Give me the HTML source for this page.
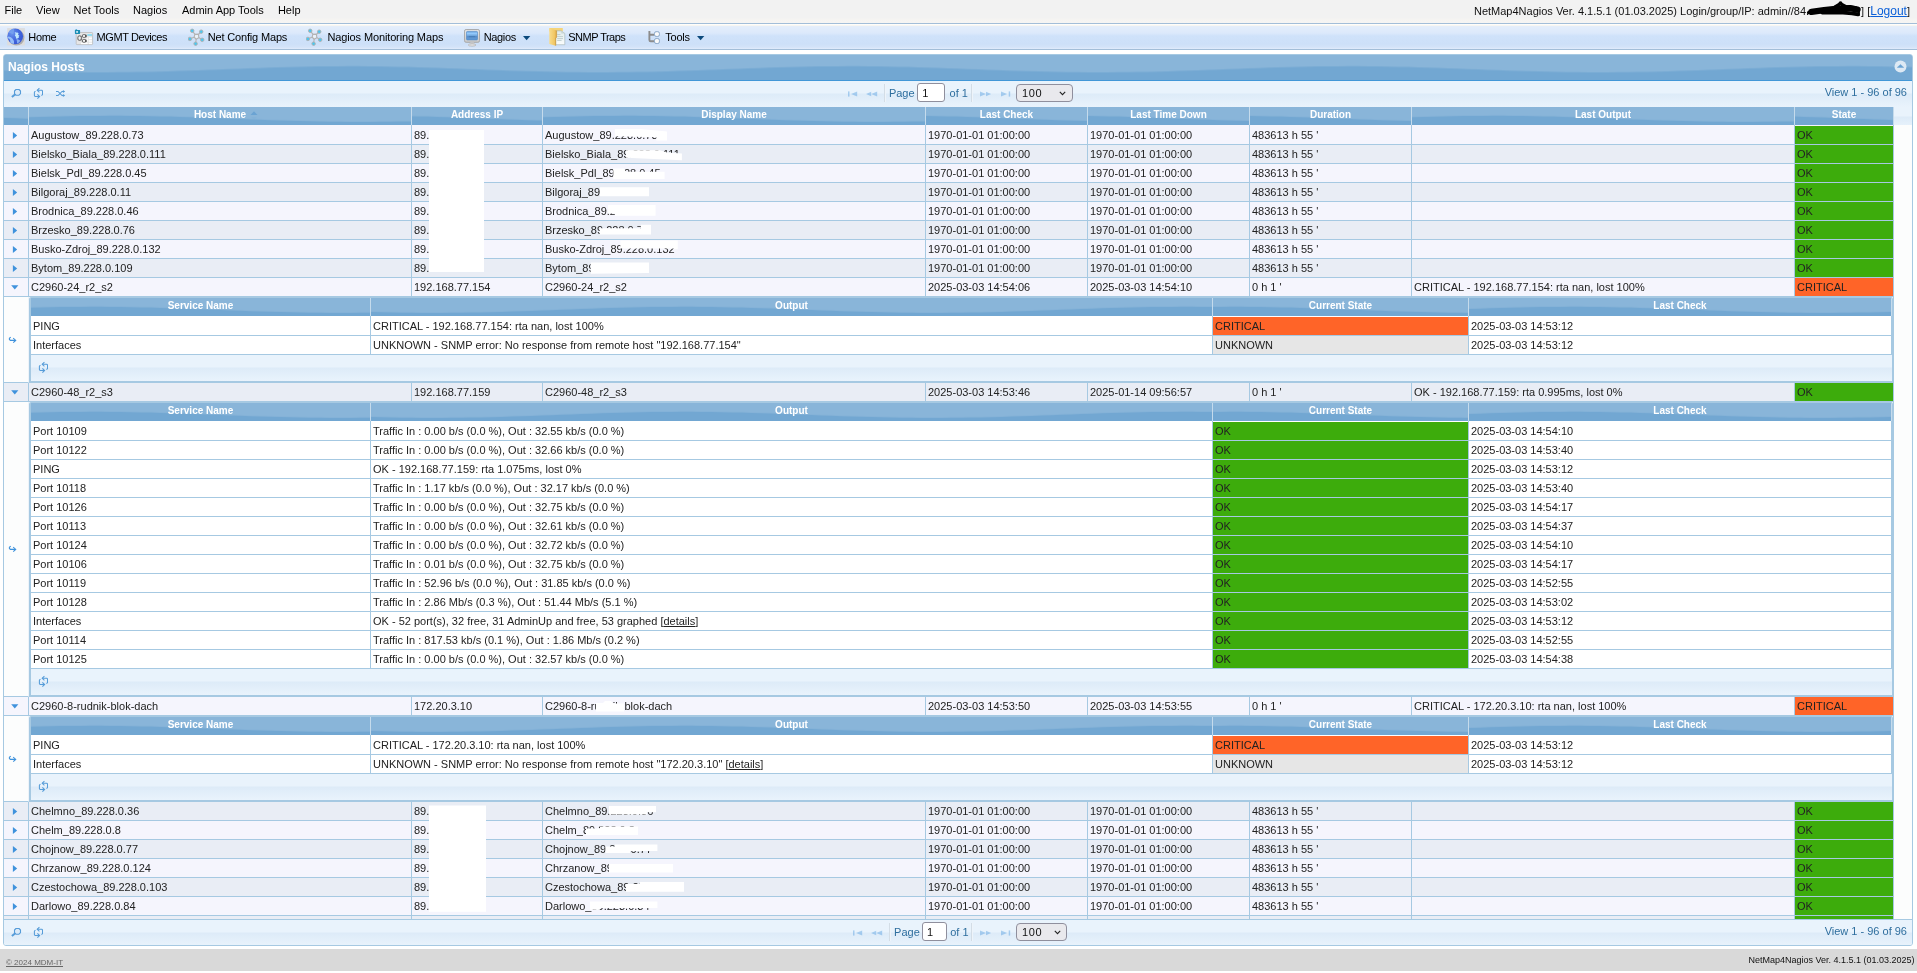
<!DOCTYPE html><html lang="en"><head><meta charset="utf-8"><title>NetMap4Nagios - Nagios Hosts</title><style>
*{box-sizing:border-box}
html,body{margin:0;padding:0}
body{will-change:transform;width:1917px;height:973px;overflow:hidden;background:#fff;font-family:"Liberation Sans",Arial,sans-serif;font-size:11px;color:#222;position:relative}
a{color:inherit}
#mb{position:absolute;left:0;top:0;width:1917px;height:23px;background:linear-gradient(#f2f2f2 0,#f2f2f2 18px,#f5f4f2 19px,#f6f5f3 23px);font-size:11px;color:#000}
#mb .mi{position:absolute;top:0;line-height:13px;padding-top:4px;white-space:nowrap}
#mb .rt{position:absolute;right:7px;top:5px;line-height:13px;white-space:nowrap;color:#111}
#mb .rt a{color:#0a5fd8;text-decoration:underline;font-size:12px}
#scrib{position:absolute;left:1800px;top:0;width:70px;height:22px}
#tb{position:absolute;left:0;top:23px;width:1917px;height:27px;border-top:1px solid #a3bed8;border-bottom:1px solid #a3bed8;background:linear-gradient(#ffffff 0,#fdfcf8 1px,#f3f1ea 2px,#e4eefb 2.5px,#dce9fb 9px,#cfe2fa 12px,#cde0f8 20px,#d3e3f8 23px,#e1ecfb 25px)}
#tb .ti{position:absolute;top:0;height:25px;white-space:nowrap;font-size:11px;letter-spacing:-0.3px;color:#000;line-height:13px;padding-top:7px}
#tb svg{position:absolute}
#gbox{position:absolute;left:3px;top:54px;width:1910px;height:892px;border:1px solid #a6c9e2;border-radius:3px;background:#fcfdfd;overflow:hidden}
.wv{position:absolute;left:0;top:0;z-index:0;display:block}
.hd{background:#72a7d2;position:relative;overflow:hidden}
#ttl{position:absolute;left:0;top:0;width:1908px;height:26px;border-bottom:1px solid #4297d7}
#ttl span{position:absolute;left:4px;top:5px;z-index:1;color:#fff;font-weight:bold;font-size:12px;line-height:14px}
#ttl .cl{position:absolute;left:1890px;top:5px;width:13px;height:13px;z-index:1}
.pg{position:absolute;left:0;width:1908px;height:26px;color:#2e6e9e;font-size:11px;background:linear-gradient(#e9f3fc 0,#e9f3fc 12px,#ddebf8 13px,#e9f3fc 26px)}
.pg svg{position:absolute}
.pg .t{position:absolute;white-space:nowrap;line-height:13px}
.pg .sep{position:absolute;width:2px;height:18px;background:#d3dde6;border-right:1px solid #eef4fa}
.pg .inp{position:absolute;height:19px;border:1px solid #8f8f9d;border-radius:3px;background:#fff;color:#111;font-size:11px;line-height:14px;padding:2px 0 0 4px}
.pg .sel{position:absolute;height:18px;border:1px solid #8f8f9d;border-radius:4px;background:#e9e9ed;color:#111;font-size:11px;letter-spacing:.6px;line-height:14px;padding:1px 0 0 5px}
#hdiv{position:absolute;left:0;top:52px;width:1908px;height:18px;background:linear-gradient(#e9f3fc 0,#e9f3fc 9px,#ddebf8 10px,#e6f1fb 18px)}
table{border-collapse:separate;border-spacing:0;table-layout:fixed}
th{position:relative;height:18px;padding:0;border-right:1px solid #c5dbec;background:#72a7d2;color:#fff;font-weight:bold;font-size:10px;text-align:center;overflow:hidden;vertical-align:top}
th div{position:relative;z-index:1;line-height:12px;padding-top:2px;white-space:nowrap}
#bdiv{position:absolute;left:0;top:70px;width:1908px;height:795px;overflow:hidden;background:#fcfdfd}
td{height:19px;padding:0 2px;border-right:1px solid #a6c9e2;border-bottom:1px solid #a6c9e2;white-space:nowrap;overflow:hidden;font-size:11px;vertical-align:middle;line-height:13px}
tr.r td{background:#f5f5fd}
tr.a td{background:#e9edf5}
tr.fr td{height:1px;border-bottom:0;background:#f5f5fd;padding:0}
td.ok{background:#3dac0c !important}
td.cr{background:#ff6428 !important}
td.un{background:#e6e6e6 !important}
td.ex{padding:0;position:relative}
td.ex svg{position:absolute}
tr.sg>td{background:#fcfdfd;padding:0}
tr.sg>td.sc{border-right:1px solid #edf3f9;position:relative}
tr.sg>td.sc svg{position:absolute;left:4px}
tr.sg>td.sb{padding:0;height:auto;vertical-align:top;overflow:visible}
.sgb{border:1px solid #a6c9e2;border-left-width:2px;width:1864px;border-radius:2px 2px 0 0;overflow:hidden;background:#fff}
.sgb table td{background:#fff}
.sgb tr.fr td{background:#fff}
.sgb .spg{position:relative;height:26px;width:1861px;background:linear-gradient(#e9f3fc 0,#e9f3fc 12px,#ddebf8 13px,#e9f3fc 26px)}
.sgb .spg svg{position:absolute;left:7px;top:6px}
.wb{position:absolute;left:0;top:0;z-index:3;pointer-events:none}
#ft{position:absolute;left:0;top:949px;width:1917px;height:22px;background:#d9d9d9;font-size:8px;color:#444}
#ft .l{position:absolute;left:6px;top:8px;line-height:11px;text-decoration:underline;color:#666}
#ft .r{position:absolute;right:2.5px;top:5px;line-height:12px;font-size:9px;color:#111}
</style></head><body>
<svg width="0" height="0" style="position:absolute"><defs><pattern id="wave" patternUnits="userSpaceOnUse" width="500" height="100"><rect width="500" height="100" fill="#72a7d2"/><path d="M0,0 L0,52.55 L10,52.17 L20,51.79 L30,51.40 L40,51.03 L50,50.67 L60,50.33 L70,50.02 L80,49.73 L90,49.48 L100,49.27 L110,49.09 L120,48.97 L130,48.88 L140,48.85 L150,48.87 L160,48.93 L170,49.04 L180,49.19 L190,49.39 L200,49.62 L210,49.90 L220,50.20 L230,50.53 L240,50.88 L250,51.25 L260,51.63 L270,52.01 L280,52.40 L290,52.77 L300,53.13 L310,53.47 L320,53.78 L330,54.07 L340,54.32 L350,54.53 L360,54.71 L370,54.83 L380,54.92 L390,54.95 L400,54.93 L410,54.87 L420,54.76 L430,54.61 L440,54.41 L450,54.18 L460,53.90 L470,53.60 L480,53.27 L490,52.92 L500,52.55 L500,0 Z" fill="#89b5d9"/></pattern><radialGradient id="glb" cx="0.3" cy="0.3" r="0.85"><stop offset="0" stop-color="#6d96ee"/><stop offset="0.5" stop-color="#4468de"/><stop offset="1" stop-color="#3355d2"/></radialGradient><linearGradient id="scr" x1="0" y1="0" x2="0" y2="1"><stop offset="0" stop-color="#6aa4e0"/><stop offset="0.25" stop-color="#93c9fb"/><stop offset="0.5" stop-color="#6ea6de"/><stop offset="0.6" stop-color="#588fcb"/><stop offset="1" stop-color="#629bd6"/></linearGradient><linearGradient id="bez" x1="0" y1="0" x2="0" y2="1"><stop offset="0" stop-color="#e6e6e6"/><stop offset="1" stop-color="#c9c9c9"/></linearGradient><linearGradient id="doc" x1="0" y1="0" x2="0" y2="1"><stop offset="0" stop-color="#dfeaea"/><stop offset="1" stop-color="#fbfdfd"/></linearGradient><linearGradient id="fld" x1="0" y1="0" x2="1" y2="0"><stop offset="0" stop-color="#f8dc8c"/><stop offset="0.7" stop-color="#f1c765"/><stop offset="1" stop-color="#dca541"/></linearGradient></defs></svg>
<div id="mb">
<span class="mi" style="left:4.5px">File</span>
<span class="mi" style="left:36px">View</span>
<span class="mi" style="left:73.6px">Net Tools</span>
<span class="mi" style="left:133px">Nagios</span>
<span class="mi" style="left:182px">Admin App Tools</span>
<span class="mi" style="left:277.9px">Help</span>
<span class="rt">NetMap4Nagios Ver. 4.1.5.1 (01.03.2025) Login/group/IP: admin//84.<span style="display:inline-block;width:52px"></span>] [<a>Logout</a>]</span>
<svg id="scrib" viewBox="0 0 70 22" fill="none" stroke="#000" stroke-linecap="round" stroke-linejoin="round"><path d="M8.5 12.6 L13 11.6" stroke-width="3.2"/><path d="M11.5 11.8 L24 10.2 L38 8.8 L50 8.2 L57.5 9.6" stroke-width="6.4"/><path d="M22 12.6 L40 12.4 L52 13.4 L58 14.4" stroke-width="3.6"/><path d="M35 6.8 L40.4 3.6 L46.5 7" stroke-width="3.2"/><path d="M48 6.4 L56 7.4 L58.8 11.5 L58.8 15" stroke-width="2.2"/><circle cx="40.5" cy="3.1" r="1.9" fill="#000" stroke="none"/></svg>
</div>
<div id="tb"><svg style="left:7px;top:4px" width="19" height="19" viewBox="0 0 19 19"><rect x="0.2" y="0.1" width="17.7" height="17.3" fill="#dddddd"/><ellipse cx="9.4" cy="9.6" rx="8" ry="7.9" fill="#555" opacity=".35"/><circle cx="8.2" cy="8.3" r="7.9" fill="url(#glb)"/><path d="M0.5 8.4 C3 8.2 5.6 10 6.6 12.2 C7.2 13.6 7.2 14.8 6.8 16 C5.4 15.8 4.2 15.2 3.2 14.4 C3.8 12.6 2.8 10.6 0.6 10 Z" fill="#9cc4fb" opacity=".92"/><path d="M7.7 4.4 C9 4.2 9.6 5 10.6 4.6 L11.6 5.6 L11 6.8 L12.4 7.8 L11.6 8.8 L12 9.6 C11 10.6 10 11 8.8 10.6 C9.4 9.4 8.6 8.4 7.8 7.6 C8.6 6.6 8.6 5.4 7.7 4.4 Z" fill="#bfe6fc"/><path d="M9.4 11.2 C10.8 11 12.4 11.6 13.4 12.8 C12.6 14 11.4 15 10 15.6 C10.2 14 9.8 12.6 9.4 11.2 Z" fill="#8fb7f6" opacity=".9"/><path d="M1.4 4.6 C2.6 2.6 4.6 1 7 0.6 C7.4 2.4 7 4.4 6.2 6.2 C4.6 5.4 3 5 1.4 4.6 Z" fill="#7aa4f2" opacity=".75"/></svg><svg style="left:74px;top:5px" width="20" height="17" viewBox="0 0 20 17"><rect x="2.2" y="3.5" width="16.4" height="12.1" rx=".8" fill="#e6e6e6" stroke="#bdbdbd" stroke-width=".8"/><rect x="13.3" y="5.1" width="4.7" height="1.8" fill="#8bdcf3"/><rect x="14.8" y="8.5" width="3.2" height="1.7" fill="#fff"/><rect x="14.8" y="11.2" width="3.2" height="1.5" fill="#fff"/><rect x="14.8" y="13.7" width="3.2" height="1.4" fill="#fff"/><rect x="7" y="13.7" width="6.6" height="1.4" fill="#fff"/><rect x="12.6" y="8.5" width="1.4" height="4.2" fill="#f7f7f7"/><g fill="#f2f2f2" stroke="#5e5e5e" stroke-width="1"><rect x="3.9" y="6.9" width="3.4" height="4.4" rx="1.3"/><rect x="8.3" y="5.6" width="3.6" height="2.8" rx="1.2"/><rect x="8.3" y="10.5" width="3.6" height="2.8" rx="1.2"/></g><path d="M11.9 5.8 V8.2 M11.9 10.7 V13.1" stroke="#4a4a4a" stroke-width="1.3"/><path d="M7.3 8 L8.3 7.2 M7.3 10.4 L8.3 11.6" stroke="#5e5e5e" stroke-width=".9"/><path d="M0.9 1 L2.4 0.3 L3.4 1 H5.6 Q6.1 1 6.1 1.6 V4.3 Q6.1 4.9 5.5 4.9 H1.5 Q0.9 4.9 0.9 4.3 Z" fill="#1a8db4"/><rect x="2.2" y="2.2" width="1.8" height="1.5" fill="#e9f7fc"/></svg><svg style="left:188px;top:4.4px" width="17" height="18" viewBox="0 0 17 18"><g stroke="#b3b3b3" stroke-width="1.1" fill="none"><path d="M4.2 2.8 L7 6.4 M13.2 3.7 L10.4 6.6 M1.8 10.9 L6.4 9 M14.2 11.8 L10.6 9.4 M7.6 15.9 L8.2 11"/><path d="M6.8 6.4 L10.4 6.2 L10.8 9.6 L8.2 11.2 L6.2 9.2 Z" fill="#eaf1f8"/></g><g fill="#4cc7f0" stroke="#b0b0b0" stroke-width=".9"><circle cx="4.2" cy="2.8" r="1.75"/><circle cx="13.2" cy="3.7" r="1.75"/><circle cx="1.9" cy="10.9" r="1.75"/><circle cx="14.2" cy="11.8" r="1.75"/><circle cx="7.6" cy="15.7" r="1.75"/></g></svg><svg style="left:306px;top:4.4px" width="17" height="18" viewBox="0 0 17 18"><g stroke="#b3b3b3" stroke-width="1.1" fill="none"><path d="M4.2 2.8 L7 6.4 M13.2 3.7 L10.4 6.6 M1.8 10.9 L6.4 9 M14.2 11.8 L10.6 9.4 M7.6 15.9 L8.2 11"/><path d="M6.8 6.4 L10.4 6.2 L10.8 9.6 L8.2 11.2 L6.2 9.2 Z" fill="#eaf1f8"/></g><g fill="#4cc7f0" stroke="#b0b0b0" stroke-width=".9"><circle cx="4.2" cy="2.8" r="1.75"/><circle cx="13.2" cy="3.7" r="1.75"/><circle cx="1.9" cy="10.9" r="1.75"/><circle cx="14.2" cy="11.8" r="1.75"/><circle cx="7.6" cy="15.7" r="1.75"/></g></svg><svg style="left:464px;top:5px" width="17" height="18" viewBox="0 0 17 18"><rect x="0.5" y="0.5" width="15" height="12.8" rx="1.6" fill="url(#bez)" stroke="#a4a4a4" stroke-width=".9"/><rect x="2.5" y="2.4" width="11" height="8.5" rx=".9" fill="url(#scr)" stroke="#4c86c6" stroke-width=".6"/><rect x="4.8" y="7.2" width="6.4" height="1" fill="#3f74ad" opacity=".75"/><path d="M6.4 13.4 H9.8 L10.3 15.4 H5.9 Z" fill="#d5d5d5"/><ellipse cx="8.1" cy="16" rx="3.8" ry="1.1" fill="#ededed" stroke="#a8a8a8" stroke-width=".7"/></svg><svg style="left:548px;top:3px" width="18" height="20" viewBox="0 0 18 20"><rect x="1.3" y="1.1" width="13.5" height="3.4" rx=".5" fill="#f4d47a"/><path d="M7.6 3.8 H13 L16.8 6.4 V17.7 H7.6 Z" fill="url(#doc)" stroke="#9fb0b0" stroke-width=".6"/><path d="M13 3.8 L13.4 6.6 L16.8 6.4 Z" fill="#c9d6d6"/><path d="M9.2 7.6 H12.4 M9.2 9.6 H15 M9.2 11.6 H15 M9.2 13.4 H13.6" stroke="#b4c4c4" stroke-width=".8"/><path d="M1.3 1.3 L8.6 3.6 V10.4 L7.7 10.8 V18.7 L1.3 17.1 Z" fill="url(#fld)"/><path d="M8.6 3.8 V10.4 L7.7 10.8 V18.6" stroke="#c89639" stroke-width=".7" fill="none"/></svg><svg style="left:647px;top:6px" width="14" height="15" viewBox="0 0 14 15"><path d="M2.4 1 V10 Q2.4 11.3 3.7 11.3 H7.4 M2.4 4.75 H7.4" fill="none" stroke="#8c8c8c" stroke-width="1.9"/><rect x="7.5" y="1.7" width="4.9" height="4.7" rx="1.6" fill="#fbfbfb" stroke="#8ba8c9" stroke-width="1"/><rect x="7.5" y="8.6" width="4.9" height="4.9" rx="1.6" fill="#fbfbfb" stroke="#8ba8c9" stroke-width="1"/></svg><svg style="left:522.7px;top:12px" width="8" height="5" viewBox="0 0 8 5"><path d="M0 0 H7.3 L3.65 4.3 Z" fill="#0c4a7c"/></svg><svg style="left:696.8px;top:12px" width="8" height="5" viewBox="0 0 8 5"><path d="M0 0 H7.3 L3.65 4.3 Z" fill="#0c4a7c"/></svg>
<span class="ti" style="left:28.3px;letter-spacing:-0.33px">Home</span>
<span class="ti" style="left:96.6px;letter-spacing:-0.42px">MGMT Devices</span>
<span class="ti" style="left:207.8px;letter-spacing:-0.17px">Net Config Maps</span>
<span class="ti" style="left:327.5px;letter-spacing:-0.13px">Nagios Monitoring Maps</span>
<span class="ti" style="left:483.8px;letter-spacing:-0.38px">Nagios</span>
<span class="ti" style="left:568.2px;letter-spacing:-0.5px">SNMP Traps</span>
<span class="ti" style="left:665.3px;letter-spacing:-0.26px">Tools</span>
</div>
<div id="gbox">
<div id="ttl" class="hd"><svg class="wv" width="1908" height="27" viewBox="0 0 1908 27" preserveAspectRatio="none"><g transform="translate(704.0,-37.6)"><rect x="-704.0" y="37.6" width="1908" height="27" fill="url(#wave)"/></g></svg><span>Nagios Hosts</span><svg class="cl" viewBox="0 0 13 13"><circle cx="6.5" cy="6.5" r="6" fill="#dde9f4"/><path d="M3.3 7.4 L6.5 4.5 L9.7 7.4 Z" fill="#6aa3d3" stroke="#6aa3d3" stroke-width=".5" stroke-linejoin="round"/></svg></div>
<div class="pg" style="top:26px"><svg style="left:7px;top:7px" width="12" height="12" viewBox="0 0 12 12"><path d="M5 1.5 H8 L9.5 3 V5.7 L8 7.2 H5 L3.5 5.7 V3 Z" fill="#dbeaf8" stroke="#569cd8" stroke-width="1.1" stroke-linejoin="round"/><path d="M4.3 6.2 L0.9 9" stroke="#569cd8" stroke-width="2"/></svg><svg style="left:29px;top:6px" width="12" height="13" viewBox="0 0 12 13" fill="none" stroke="#569cd8" stroke-width="1.05"><path d="M4.3 3.3 H8.6 Q9.5 3.3 9.5 4.2 V7.6 L8.5 8.6"/><path d="M6.4 1.2 L4.2 3.3 L6.4 5.4"/><path d="M6.6 9.5 H2.3 Q1.4 9.5 1.4 8.6 V5.2 L2.4 4.2"/><path d="M4.4 7.4 L6.6 9.5 L4.4 11.6"/></svg><svg style="left:52px;top:9px" width="10" height="8" viewBox="0 0 10 8" fill="none" stroke="#569cd8" stroke-width="1.05"><path d="M0 1.5 H2 L6 5.5 H7.2"/><path d="M0 5.5 H2 L6 1.5 H7.2"/><path d="M6.9 0 L9.2 1.5 L6.9 3 Z M6.9 4 L9.2 5.5 L6.9 7 Z" fill="#569cd8" stroke="none"/></svg><svg style="left:843.75px;top:10px;opacity:0.38" width="10" height="6" viewBox="0 0 10 6" fill="#3f92dc"><rect x="0" y="0.4" width="1.5" height="5.2"/><path d="M9.2 0.4 V5.6 L3 3 Z"/></svg><svg style="left:861.6px;top:10px;opacity:0.38" width="12" height="6" viewBox="0 0 12 6" fill="#3f92dc"><path d="M5.2 0.7 V5.3 L0 3 Z"/><path d="M11.2 0.4 V5.6 L5.2 3 Z"/></svg><div class="sep" style="left:880.2px;top:3px"></div><div class="t" style="left:884.9px;top:6px">Page</div><div class="inp" style="left:913.2px;top:2px;width:28.3px">1</div><div class="t" style="left:945.6px;top:6px">of 1</div><div class="sep" style="left:967px;top:3px"></div><svg style="left:975.6px;top:10px;opacity:0.38" width="12" height="6" viewBox="0 0 12 6" fill="#3f92dc"><path d="M0 0.4 V5.6 L6 3 Z"/><path d="M6 0.7 V5.3 L11.2 3 Z"/></svg><svg style="left:996.8px;top:10px;opacity:0.38" width="10" height="6" viewBox="0 0 10 6" fill="#3f92dc"><path d="M0 0.4 V5.6 L6.2 3 Z"/><rect x="7.7" y="0.4" width="1.5" height="5.2"/></svg><div class="sel" style="left:1012px;top:3px;width:56.5px">100<svg style="left:42.0px;top:6px" width="7" height="5" viewBox="0 0 7 5" fill="none" stroke="#222" stroke-width="1.1"><path d="M0.8 0.9 L3.5 3.6 L6.2 0.9"/></svg></div><div class="t" style="right:5px;top:5px">View 1 - 96 of 96</div></div>
<div id="hdiv"><table style="width:1890px"><colgroup><col style="width:25px"><col style="width:383px"><col style="width:131px"><col style="width:383px"><col style="width:162px"><col style="width:162px"><col style="width:162px"><col style="width:383px"><col style="width:99px"></colgroup><tr><th><svg class="wv" width="24" height="18" viewBox="0 0 24 18" preserveAspectRatio="none"><g transform="translate(-238.0,-40.2)"><rect x="238.0" y="40.2" width="24" height="18" fill="url(#wave)"/></g></svg><div></div></th><th><svg class="wv" width="382" height="18" viewBox="0 0 382 18" preserveAspectRatio="none"><g transform="translate(-59.0,-40.2)"><rect x="59.0" y="40.2" width="382" height="18" fill="url(#wave)"/></g></svg><div>Host Name</div><svg style="position:absolute;z-index:1;left:221px;top:4px" width="8" height="10" viewBox="0 0 8 10"><path d="M0.5 4 L4 0.3 L7.5 4 Z" fill="#6aa3d3"/><path d="M1.2 6.2 L4 9 L6.8 6.2 Z" fill="#7fb0d8" opacity=".55"/></svg></th><th><svg class="wv" width="130" height="18" viewBox="0 0 130 18" preserveAspectRatio="none"><g transform="translate(-185.0,-40.2)"><rect x="185.0" y="40.2" width="130" height="18" fill="url(#wave)"/></g></svg><div>Address IP</div></th><th><svg class="wv" width="382" height="18" viewBox="0 0 382 18" preserveAspectRatio="none"><g transform="translate(-59.0,-40.2)"><rect x="59.0" y="40.2" width="382" height="18" fill="url(#wave)"/></g></svg><div>Display Name</div></th><th><svg class="wv" width="161" height="18" viewBox="0 0 161 18" preserveAspectRatio="none"><g transform="translate(-169.5,-40.2)"><rect x="169.5" y="40.2" width="161" height="18" fill="url(#wave)"/></g></svg><div>Last Check</div></th><th><svg class="wv" width="161" height="18" viewBox="0 0 161 18" preserveAspectRatio="none"><g transform="translate(-169.5,-40.2)"><rect x="169.5" y="40.2" width="161" height="18" fill="url(#wave)"/></g></svg><div>Last Time Down</div></th><th><svg class="wv" width="161" height="18" viewBox="0 0 161 18" preserveAspectRatio="none"><g transform="translate(-169.5,-40.2)"><rect x="169.5" y="40.2" width="161" height="18" fill="url(#wave)"/></g></svg><div>Duration</div></th><th><svg class="wv" width="382" height="18" viewBox="0 0 382 18" preserveAspectRatio="none"><g transform="translate(-59.0,-40.2)"><rect x="59.0" y="40.2" width="382" height="18" fill="url(#wave)"/></g></svg><div>Last Output</div></th><th><svg class="wv" width="98" height="18" viewBox="0 0 98 18" preserveAspectRatio="none"><g transform="translate(-201.0,-40.2)"><rect x="201.0" y="40.2" width="98" height="18" fill="url(#wave)"/></g></svg><div>State</div></th></tr></table></div>
<div id="bdiv"><table style="width:1890px"><colgroup><col style="width:25px"><col style="width:383px"><col style="width:131px"><col style="width:383px"><col style="width:162px"><col style="width:162px"><col style="width:162px"><col style="width:383px"><col style="width:99px"></colgroup><tr class="fr"><td></td><td></td><td></td><td></td><td></td><td></td><td></td><td></td><td></td></tr><tr class="r"><td class="ex"><svg style="left:8px;top:6px" width="6" height="8" viewBox="0 0 6 8"><path d="M0.9 0 L5.2 3.5 L0.9 7 Z" fill="#3f92dc"/></svg></td><td>Augustow_89.228.0.73</td><td>89.</td><td>Augustow_89.228.0.73</td><td>1970-01-01 01:00:00</td><td>1970-01-01 01:00:00</td><td>483613 h 55 '</td><td></td><td class="ok">OK</td></tr><tr class="a"><td class="ex"><svg style="left:8px;top:6px" width="6" height="8" viewBox="0 0 6 8"><path d="M0.9 0 L5.2 3.5 L0.9 7 Z" fill="#3f92dc"/></svg></td><td>Bielsko_Biala_89.228.0.111</td><td>89.</td><td>Bielsko_Biala_89.228.0.111</td><td>1970-01-01 01:00:00</td><td>1970-01-01 01:00:00</td><td>483613 h 55 '</td><td></td><td class="ok">OK</td></tr><tr class="r"><td class="ex"><svg style="left:8px;top:6px" width="6" height="8" viewBox="0 0 6 8"><path d="M0.9 0 L5.2 3.5 L0.9 7 Z" fill="#3f92dc"/></svg></td><td>Bielsk_Pdl_89.228.0.45</td><td>89.</td><td>Bielsk_Pdl_89.228.0.45</td><td>1970-01-01 01:00:00</td><td>1970-01-01 01:00:00</td><td>483613 h 55 '</td><td></td><td class="ok">OK</td></tr><tr class="a"><td class="ex"><svg style="left:8px;top:6px" width="6" height="8" viewBox="0 0 6 8"><path d="M0.9 0 L5.2 3.5 L0.9 7 Z" fill="#3f92dc"/></svg></td><td>Bilgoraj_89.228.0.11</td><td>89.</td><td>Bilgoraj_89.228.0.11</td><td>1970-01-01 01:00:00</td><td>1970-01-01 01:00:00</td><td>483613 h 55 '</td><td></td><td class="ok">OK</td></tr><tr class="r"><td class="ex"><svg style="left:8px;top:6px" width="6" height="8" viewBox="0 0 6 8"><path d="M0.9 0 L5.2 3.5 L0.9 7 Z" fill="#3f92dc"/></svg></td><td>Brodnica_89.228.0.46</td><td>89.</td><td>Brodnica_89.228.0.46</td><td>1970-01-01 01:00:00</td><td>1970-01-01 01:00:00</td><td>483613 h 55 '</td><td></td><td class="ok">OK</td></tr><tr class="a"><td class="ex"><svg style="left:8px;top:6px" width="6" height="8" viewBox="0 0 6 8"><path d="M0.9 0 L5.2 3.5 L0.9 7 Z" fill="#3f92dc"/></svg></td><td>Brzesko_89.228.0.76</td><td>89.</td><td>Brzesko_89.228.0.76</td><td>1970-01-01 01:00:00</td><td>1970-01-01 01:00:00</td><td>483613 h 55 '</td><td></td><td class="ok">OK</td></tr><tr class="r"><td class="ex"><svg style="left:8px;top:6px" width="6" height="8" viewBox="0 0 6 8"><path d="M0.9 0 L5.2 3.5 L0.9 7 Z" fill="#3f92dc"/></svg></td><td>Busko-Zdroj_89.228.0.132</td><td>89.</td><td>Busko-Zdroj_89.228.0.132</td><td>1970-01-01 01:00:00</td><td>1970-01-01 01:00:00</td><td>483613 h 55 '</td><td></td><td class="ok">OK</td></tr><tr class="a"><td class="ex"><svg style="left:8px;top:6px" width="6" height="8" viewBox="0 0 6 8"><path d="M0.9 0 L5.2 3.5 L0.9 7 Z" fill="#3f92dc"/></svg></td><td>Bytom_89.228.0.109</td><td>89.</td><td>Bytom_89.228.0.109</td><td>1970-01-01 01:00:00</td><td>1970-01-01 01:00:00</td><td>483613 h 55 '</td><td></td><td class="ok">OK</td></tr><tr class="r"><td class="ex"><svg style="left:7px;top:7px" width="8" height="5" viewBox="0 0 8 5"><path d="M0.2 0.3 H7.4 L3.8 4.6 Z" fill="#3f92dc"/></svg></td><td>C2960-24_r2_s2</td><td>192.168.77.154</td><td>C2960-24_r2_s2</td><td>2025-03-03 14:54:06</td><td>2025-03-03 14:54:10</td><td>0 h 1 '</td><td>CRITICAL - 192.168.77.154: rta nan, lost 100%</td><td class="cr">CRITICAL</td></tr><tr class="sg"><td class="sc"><svg style="top:39px" width="9" height="8" viewBox="0 0 9 8" fill="none" stroke="#3f92dc" stroke-width="1.1"><path d="M2.7 1.2 L1.4 2.3 V3.4 L2.4 4.4 H7.4"/><path d="M5.2 2.2 L7.7 4.4 L5.2 6.6"/></svg></td><td class="sb" colspan="8"><div class="sgb"><table style="width:1861px"><colgroup><col style="width:340px"><col style="width:842px"><col style="width:256px"><col style="width:423px"></colgroup><tr><th><svg class="wv" width="339" height="18" viewBox="0 0 339 18" preserveAspectRatio="none"><g transform="translate(-80.5,-40.2)"><rect x="80.5" y="40.2" width="339" height="18" fill="url(#wave)"/></g></svg><div>Service Name</div></th><th><svg class="wv" width="841" height="18" viewBox="0 0 841 18" preserveAspectRatio="none"><g transform="translate(170.5,-40.2)"><rect x="-170.5" y="40.2" width="841" height="18" fill="url(#wave)"/></g></svg><div>Output</div></th><th><svg class="wv" width="255" height="18" viewBox="0 0 255 18" preserveAspectRatio="none"><g transform="translate(-122.5,-40.2)"><rect x="122.5" y="40.2" width="255" height="18" fill="url(#wave)"/></g></svg><div>Current State</div></th><th><svg class="wv" width="422" height="18" viewBox="0 0 422 18" preserveAspectRatio="none"><g transform="translate(-39.0,-40.2)"><rect x="39.0" y="40.2" width="422" height="18" fill="url(#wave)"/></g></svg><div>Last Check</div></th></tr></table><table style="width:1861px"><colgroup><col style="width:340px"><col style="width:842px"><col style="width:256px"><col style="width:423px"></colgroup><tr class="fr"><td></td><td></td><td></td><td></td></tr><tr><td>PING</td><td>CRITICAL - 192.168.77.154: rta nan, lost 100%</td><td class="cr">CRITICAL</td><td>2025-03-03 14:53:12</td></tr><tr><td>Interfaces</td><td>UNKNOWN - SNMP error: No response from remote host "192.168.77.154"</td><td class="un">UNKNOWN</td><td>2025-03-03 14:53:12</td></tr></table><div class="spg"><svg  width="12" height="13" viewBox="0 0 12 13" fill="none" stroke="#569cd8" stroke-width="1.05"><path d="M4.3 3.3 H8.6 Q9.5 3.3 9.5 4.2 V7.6 L8.5 8.6"/><path d="M6.4 1.2 L4.2 3.3 L6.4 5.4"/><path d="M6.6 9.5 H2.3 Q1.4 9.5 1.4 8.6 V5.2 L2.4 4.2"/><path d="M4.4 7.4 L6.6 9.5 L4.4 11.6"/></svg></div></div></td></tr><tr class="a"><td class="ex"><svg style="left:7px;top:7px" width="8" height="5" viewBox="0 0 8 5"><path d="M0.2 0.3 H7.4 L3.8 4.6 Z" fill="#3f92dc"/></svg></td><td>C2960-48_r2_s3</td><td>192.168.77.159</td><td>C2960-48_r2_s3</td><td>2025-03-03 14:53:46</td><td>2025-01-14 09:56:57</td><td>0 h 1 '</td><td>OK - 192.168.77.159: rta 0.995ms, lost 0%</td><td class="ok">OK</td></tr><tr class="sg"><td class="sc"><svg style="top:143px" width="9" height="8" viewBox="0 0 9 8" fill="none" stroke="#3f92dc" stroke-width="1.1"><path d="M2.7 1.2 L1.4 2.3 V3.4 L2.4 4.4 H7.4"/><path d="M5.2 2.2 L7.7 4.4 L5.2 6.6"/></svg></td><td class="sb" colspan="8"><div class="sgb"><table style="width:1861px"><colgroup><col style="width:340px"><col style="width:842px"><col style="width:256px"><col style="width:423px"></colgroup><tr><th><svg class="wv" width="339" height="18" viewBox="0 0 339 18" preserveAspectRatio="none"><g transform="translate(-80.5,-40.2)"><rect x="80.5" y="40.2" width="339" height="18" fill="url(#wave)"/></g></svg><div>Service Name</div></th><th><svg class="wv" width="841" height="18" viewBox="0 0 841 18" preserveAspectRatio="none"><g transform="translate(170.5,-40.2)"><rect x="-170.5" y="40.2" width="841" height="18" fill="url(#wave)"/></g></svg><div>Output</div></th><th><svg class="wv" width="255" height="18" viewBox="0 0 255 18" preserveAspectRatio="none"><g transform="translate(-122.5,-40.2)"><rect x="122.5" y="40.2" width="255" height="18" fill="url(#wave)"/></g></svg><div>Current State</div></th><th><svg class="wv" width="422" height="18" viewBox="0 0 422 18" preserveAspectRatio="none"><g transform="translate(-39.0,-40.2)"><rect x="39.0" y="40.2" width="422" height="18" fill="url(#wave)"/></g></svg><div>Last Check</div></th></tr></table><table style="width:1861px"><colgroup><col style="width:340px"><col style="width:842px"><col style="width:256px"><col style="width:423px"></colgroup><tr class="fr"><td></td><td></td><td></td><td></td></tr><tr><td>Port 10109</td><td>Traffic In : 0.00 b/s (0.0 %), Out : 32.55 kb/s (0.0 %)</td><td class="ok">OK</td><td>2025-03-03 14:54:10</td></tr><tr><td>Port 10122</td><td>Traffic In : 0.00 b/s (0.0 %), Out : 32.66 kb/s (0.0 %)</td><td class="ok">OK</td><td>2025-03-03 14:53:40</td></tr><tr><td>PING</td><td>OK - 192.168.77.159: rta 1.075ms, lost 0%</td><td class="ok">OK</td><td>2025-03-03 14:53:12</td></tr><tr><td>Port 10118</td><td>Traffic In : 1.17 kb/s (0.0 %), Out : 32.17 kb/s (0.0 %)</td><td class="ok">OK</td><td>2025-03-03 14:53:40</td></tr><tr><td>Port 10126</td><td>Traffic In : 0.00 b/s (0.0 %), Out : 32.75 kb/s (0.0 %)</td><td class="ok">OK</td><td>2025-03-03 14:54:17</td></tr><tr><td>Port 10113</td><td>Traffic In : 0.00 b/s (0.0 %), Out : 32.61 kb/s (0.0 %)</td><td class="ok">OK</td><td>2025-03-03 14:54:37</td></tr><tr><td>Port 10124</td><td>Traffic In : 0.00 b/s (0.0 %), Out : 32.72 kb/s (0.0 %)</td><td class="ok">OK</td><td>2025-03-03 14:54:10</td></tr><tr><td>Port 10106</td><td>Traffic In : 0.01 b/s (0.0 %), Out : 32.75 kb/s (0.0 %)</td><td class="ok">OK</td><td>2025-03-03 14:54:17</td></tr><tr><td>Port 10119</td><td>Traffic In : 52.96 b/s (0.0 %), Out : 31.85 kb/s (0.0 %)</td><td class="ok">OK</td><td>2025-03-03 14:52:55</td></tr><tr><td>Port 10128</td><td>Traffic In : 2.86 Mb/s (0.3 %), Out : 51.44 Mb/s (5.1 %)</td><td class="ok">OK</td><td>2025-03-03 14:53:02</td></tr><tr><td>Interfaces</td><td>OK - 52 port(s), 32 free, 31 AdminUp and free, 53 graphed [<u>details</u>]</td><td class="ok">OK</td><td>2025-03-03 14:53:12</td></tr><tr><td>Port 10114</td><td>Traffic In : 817.53 kb/s (0.1 %), Out : 1.86 Mb/s (0.2 %)</td><td class="ok">OK</td><td>2025-03-03 14:52:55</td></tr><tr><td>Port 10125</td><td>Traffic In : 0.00 b/s (0.0 %), Out : 32.57 kb/s (0.0 %)</td><td class="ok">OK</td><td>2025-03-03 14:54:38</td></tr></table><div class="spg"><svg  width="12" height="13" viewBox="0 0 12 13" fill="none" stroke="#569cd8" stroke-width="1.05"><path d="M4.3 3.3 H8.6 Q9.5 3.3 9.5 4.2 V7.6 L8.5 8.6"/><path d="M6.4 1.2 L4.2 3.3 L6.4 5.4"/><path d="M6.6 9.5 H2.3 Q1.4 9.5 1.4 8.6 V5.2 L2.4 4.2"/><path d="M4.4 7.4 L6.6 9.5 L4.4 11.6"/></svg></div></div></td></tr><tr class="r"><td class="ex"><svg style="left:7px;top:7px" width="8" height="5" viewBox="0 0 8 5"><path d="M0.2 0.3 H7.4 L3.8 4.6 Z" fill="#3f92dc"/></svg></td><td>C2960-8-rudnik-blok-dach</td><td>172.20.3.10</td><td>C2960-8-rudnik-blok-dach</td><td>2025-03-03 14:53:50</td><td>2025-03-03 14:53:55</td><td>0 h 1 '</td><td>CRITICAL - 172.20.3.10: rta nan, lost 100%</td><td class="cr">CRITICAL</td></tr><tr class="sg"><td class="sc"><svg style="top:39px" width="9" height="8" viewBox="0 0 9 8" fill="none" stroke="#3f92dc" stroke-width="1.1"><path d="M2.7 1.2 L1.4 2.3 V3.4 L2.4 4.4 H7.4"/><path d="M5.2 2.2 L7.7 4.4 L5.2 6.6"/></svg></td><td class="sb" colspan="8"><div class="sgb"><table style="width:1861px"><colgroup><col style="width:340px"><col style="width:842px"><col style="width:256px"><col style="width:423px"></colgroup><tr><th><svg class="wv" width="339" height="18" viewBox="0 0 339 18" preserveAspectRatio="none"><g transform="translate(-80.5,-40.2)"><rect x="80.5" y="40.2" width="339" height="18" fill="url(#wave)"/></g></svg><div>Service Name</div></th><th><svg class="wv" width="841" height="18" viewBox="0 0 841 18" preserveAspectRatio="none"><g transform="translate(170.5,-40.2)"><rect x="-170.5" y="40.2" width="841" height="18" fill="url(#wave)"/></g></svg><div>Output</div></th><th><svg class="wv" width="255" height="18" viewBox="0 0 255 18" preserveAspectRatio="none"><g transform="translate(-122.5,-40.2)"><rect x="122.5" y="40.2" width="255" height="18" fill="url(#wave)"/></g></svg><div>Current State</div></th><th><svg class="wv" width="422" height="18" viewBox="0 0 422 18" preserveAspectRatio="none"><g transform="translate(-39.0,-40.2)"><rect x="39.0" y="40.2" width="422" height="18" fill="url(#wave)"/></g></svg><div>Last Check</div></th></tr></table><table style="width:1861px"><colgroup><col style="width:340px"><col style="width:842px"><col style="width:256px"><col style="width:423px"></colgroup><tr class="fr"><td></td><td></td><td></td><td></td></tr><tr><td>PING</td><td>CRITICAL - 172.20.3.10: rta nan, lost 100%</td><td class="cr">CRITICAL</td><td>2025-03-03 14:53:12</td></tr><tr><td>Interfaces</td><td>UNKNOWN - SNMP error: No response from remote host "172.20.3.10" [<u>details</u>]</td><td class="un">UNKNOWN</td><td>2025-03-03 14:53:12</td></tr></table><div class="spg"><svg  width="12" height="13" viewBox="0 0 12 13" fill="none" stroke="#569cd8" stroke-width="1.05"><path d="M4.3 3.3 H8.6 Q9.5 3.3 9.5 4.2 V7.6 L8.5 8.6"/><path d="M6.4 1.2 L4.2 3.3 L6.4 5.4"/><path d="M6.6 9.5 H2.3 Q1.4 9.5 1.4 8.6 V5.2 L2.4 4.2"/><path d="M4.4 7.4 L6.6 9.5 L4.4 11.6"/></svg></div></div></td></tr><tr class="a"><td class="ex"><svg style="left:8px;top:6px" width="6" height="8" viewBox="0 0 6 8"><path d="M0.9 0 L5.2 3.5 L0.9 7 Z" fill="#3f92dc"/></svg></td><td>Chelmno_89.228.0.36</td><td>89.</td><td>Chelmno_89.228.0.36</td><td>1970-01-01 01:00:00</td><td>1970-01-01 01:00:00</td><td>483613 h 55 '</td><td></td><td class="ok">OK</td></tr><tr class="r"><td class="ex"><svg style="left:8px;top:6px" width="6" height="8" viewBox="0 0 6 8"><path d="M0.9 0 L5.2 3.5 L0.9 7 Z" fill="#3f92dc"/></svg></td><td>Chelm_89.228.0.8</td><td>89.</td><td>Chelm_89.228.0.8</td><td>1970-01-01 01:00:00</td><td>1970-01-01 01:00:00</td><td>483613 h 55 '</td><td></td><td class="ok">OK</td></tr><tr class="a"><td class="ex"><svg style="left:8px;top:6px" width="6" height="8" viewBox="0 0 6 8"><path d="M0.9 0 L5.2 3.5 L0.9 7 Z" fill="#3f92dc"/></svg></td><td>Chojnow_89.228.0.77</td><td>89.</td><td>Chojnow_89.228.0.77</td><td>1970-01-01 01:00:00</td><td>1970-01-01 01:00:00</td><td>483613 h 55 '</td><td></td><td class="ok">OK</td></tr><tr class="r"><td class="ex"><svg style="left:8px;top:6px" width="6" height="8" viewBox="0 0 6 8"><path d="M0.9 0 L5.2 3.5 L0.9 7 Z" fill="#3f92dc"/></svg></td><td>Chrzanow_89.228.0.124</td><td>89.</td><td>Chrzanow_89.228.0.124</td><td>1970-01-01 01:00:00</td><td>1970-01-01 01:00:00</td><td>483613 h 55 '</td><td></td><td class="ok">OK</td></tr><tr class="a"><td class="ex"><svg style="left:8px;top:6px" width="6" height="8" viewBox="0 0 6 8"><path d="M0.9 0 L5.2 3.5 L0.9 7 Z" fill="#3f92dc"/></svg></td><td>Czestochowa_89.228.0.103</td><td>89.</td><td>Czestochowa_89.228.0.103</td><td>1970-01-01 01:00:00</td><td>1970-01-01 01:00:00</td><td>483613 h 55 '</td><td></td><td class="ok">OK</td></tr><tr class="r"><td class="ex"><svg style="left:8px;top:6px" width="6" height="8" viewBox="0 0 6 8"><path d="M0.9 0 L5.2 3.5 L0.9 7 Z" fill="#3f92dc"/></svg></td><td>Darlowo_89.228.0.84</td><td>89.</td><td>Darlowo_89.228.0.84</td><td>1970-01-01 01:00:00</td><td>1970-01-01 01:00:00</td><td>483613 h 55 '</td><td></td><td class="ok">OK</td></tr><tr class="a"><td class="ex"><svg style="left:8px;top:6px" width="6" height="8" viewBox="0 0 6 8"><path d="M0.9 0 L5.2 3.5 L0.9 7 Z" fill="#3f92dc"/></svg></td><td>Debica_89.228.0.80</td><td>89.</td><td>Debica_89.228.0.80</td><td>1970-01-01 01:00:00</td><td>1970-01-01 01:00:00</td><td>483613 h 55 '</td><td></td><td class="ok">OK</td></tr></table><svg class="wb" width="1908" height="795" viewBox="0 0 1908 795" fill="#fff"><polygon points="425.0,5.0 480.0,5.0 480.0,147.0 425.0,147.0"/><polygon points="610.9,4.0 636.0,4.0 663.0,6.4 663.0,15.4 652.4,15.4 652.4,12.2 610.9,11.3"/><polygon points="622.0,25.3 656.0,25.3 663.0,27.4 677.9,28.6 677.9,35.2 622.0,32.7"/><polygon points="609.3,43.6 620.0,43.6 622.0,46.7 660.6,46.7 660.6,54.0 609.3,54.0"/><polygon points="596.0,62.3 645.0,62.3 645.0,71.3 596.0,71.3"/><polygon points="604.0,80.0 651.6,80.0 651.6,90.8 610.8,90.8 610.8,88.5 604.0,88.5"/><polygon points="595.7,103.3 636.8,103.3 636.8,99.7 647.0,99.7 647.0,109.5 595.7,109.5"/><polygon points="616.3,115.6 673.8,115.6 673.8,124.3 670.0,124.3 670.0,123.5 616.3,123.5"/><polygon points="586.7,137.4 645.0,137.4 645.0,148.1 586.7,148.8"/><polygon points="592.0,578.0 599.0,578.0 601.0,576.0 607.0,576.0 609.0,578.5 620.0,578.5 620.0,586.5 592.0,586.5"/><polygon points="425.0,680.5 482.0,680.5 482.0,786.7 425.0,786.7"/><polygon points="605.0,681.0 652.0,681.0 652.0,687.2 643.0,687.2 643.0,689.6 605.0,689.6"/><polygon points="582.0,703.5 596.0,703.5 596.0,701.5 634.0,701.5 634.0,710.0 582.0,710.0"/><polygon points="601.5,721.5 611.0,721.5 611.0,719.6 653.4,719.6 653.4,726.0 626.0,726.0 626.0,728.0 601.5,728.0"/><polygon points="605.0,739.0 669.0,739.0 669.0,747.6 605.0,747.6"/><polygon points="622.0,759.0 636.0,759.0 636.0,757.0 680.0,757.0 680.0,766.7 622.0,766.7"/><polygon points="586.0,776.4 653.4,776.4 653.4,783.0 596.0,783.0 596.0,784.8 586.0,784.8"/></svg></div>
<div class="pg" style="top:864px;border-top:1px solid #a6c9e2"><svg style="left:7px;top:7px" width="12" height="12" viewBox="0 0 12 12"><path d="M5 1.5 H8 L9.5 3 V5.7 L8 7.2 H5 L3.5 5.7 V3 Z" fill="#dbeaf8" stroke="#569cd8" stroke-width="1.1" stroke-linejoin="round"/><path d="M4.3 6.2 L0.9 9" stroke="#569cd8" stroke-width="2"/></svg><svg style="left:29px;top:6px" width="12" height="13" viewBox="0 0 12 13" fill="none" stroke="#569cd8" stroke-width="1.05"><path d="M4.3 3.3 H8.6 Q9.5 3.3 9.5 4.2 V7.6 L8.5 8.6"/><path d="M6.4 1.2 L4.2 3.3 L6.4 5.4"/><path d="M6.6 9.5 H2.3 Q1.4 9.5 1.4 8.6 V5.2 L2.4 4.2"/><path d="M4.4 7.4 L6.6 9.5 L4.4 11.6"/></svg><svg style="left:848.5px;top:10px;opacity:0.38" width="10" height="6" viewBox="0 0 10 6" fill="#3f92dc"><rect x="0" y="0.4" width="1.5" height="5.2"/><path d="M9.2 0.4 V5.6 L3 3 Z"/></svg><svg style="left:866.6px;top:10px;opacity:0.38" width="12" height="6" viewBox="0 0 12 6" fill="#3f92dc"><path d="M5.2 0.7 V5.3 L0 3 Z"/><path d="M11.2 0.4 V5.6 L5.2 3 Z"/></svg><div class="sep" style="left:885.2px;top:3px"></div><div class="t" style="left:890.1px;top:6px">Page</div><div class="inp" style="left:918px;top:2px;width:24.6px">1</div><div class="t" style="left:946.2px;top:6px">of 1</div><div class="sep" style="left:967px;top:3px"></div><svg style="left:975.6px;top:10px;opacity:0.38" width="12" height="6" viewBox="0 0 12 6" fill="#3f92dc"><path d="M0 0.4 V5.6 L6 3 Z"/><path d="M6 0.7 V5.3 L11.2 3 Z"/></svg><svg style="left:996.8px;top:10px;opacity:0.38" width="10" height="6" viewBox="0 0 10 6" fill="#3f92dc"><path d="M0 0.4 V5.6 L6.2 3 Z"/><rect x="7.7" y="0.4" width="1.5" height="5.2"/></svg><div class="sel" style="left:1012px;top:3px;width:51px">100<svg style="left:36.5px;top:6px" width="7" height="5" viewBox="0 0 7 5" fill="none" stroke="#222" stroke-width="1.1"><path d="M0.8 0.9 L3.5 3.6 L6.2 0.9"/></svg></div><div class="t" style="right:5px;top:5px">View 1 - 96 of 96</div></div>
</div>
<div id="ft"><span class="l">© 2024 MDM-IT</span><span class="r">NetMap4Nagios Ver. 4.1.5.1 (01.03.2025)</span></div>
</body></html>
